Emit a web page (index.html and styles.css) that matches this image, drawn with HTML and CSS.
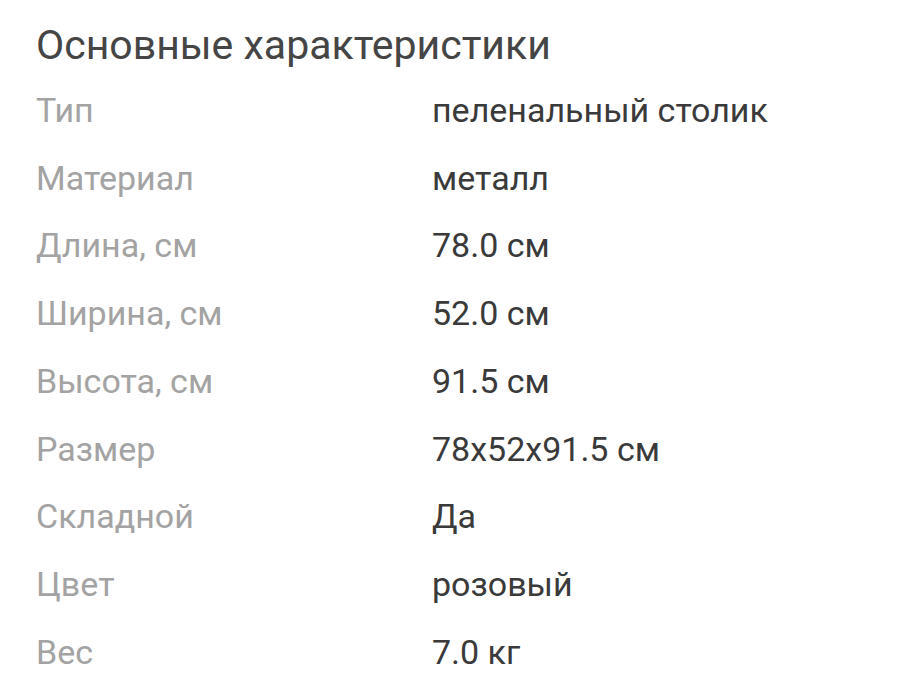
FILE: index.html
```html
<!DOCTYPE html>
<html lang="ru">
<head>
<meta charset="utf-8">
<link rel="stylesheet" href="styles.css">
</head>
<body>
<section class="specs">
  <h2 class="specs-title">Основные характеристики</h2>
  <dl class="specs-list">
    <div class="row"><dt>Тип</dt><dd>пеленальный столик</dd></div>
    <div class="row"><dt>Материал</dt><dd>металл</dd></div>
    <div class="row"><dt>Длина, см</dt><dd>78.0 см</dd></div>
    <div class="row"><dt>Ширина, см</dt><dd>52.0 см</dd></div>
    <div class="row"><dt>Высота, см</dt><dd>91.5 см</dd></div>
    <div class="row"><dt>Размер</dt><dd>78x52x91.5 см</dd></div>
    <div class="row"><dt>Складной</dt><dd>Да</dd></div>
    <div class="row"><dt>Цвет</dt><dd>розовый</dd></div>
    <div class="row"><dt>Вес</dt><dd>7.0 кг</dd></div>
  </dl>
</section>
</body>
</html>
```
FILE: styles.css
```css
html, body {
  margin: 0;
  padding: 0;
  background: #ffffff;
}
body {
  font-family: Roboto, "Noto Sans", sans-serif;
}
.specs {
  padding: 19px 0 0 36px;
}
.specs-title {
  margin: 0;
  font-weight: 400;
  font-size: 41px;
  line-height: 52px;
  color: #454545;
}
.specs-list {
  margin: 5px 0 0 0;
  padding: 0;
}
.row {
  display: grid;
  grid-template-columns: 396px 1fr;
  height: 67.75px;
  align-items: center;
}
.row dt {
  color: #a3a3a3;
  font-size: 34px;
}
.row dd {
  margin: 0;
  color: #3a3a3a;
  font-size: 34px;
}
```
